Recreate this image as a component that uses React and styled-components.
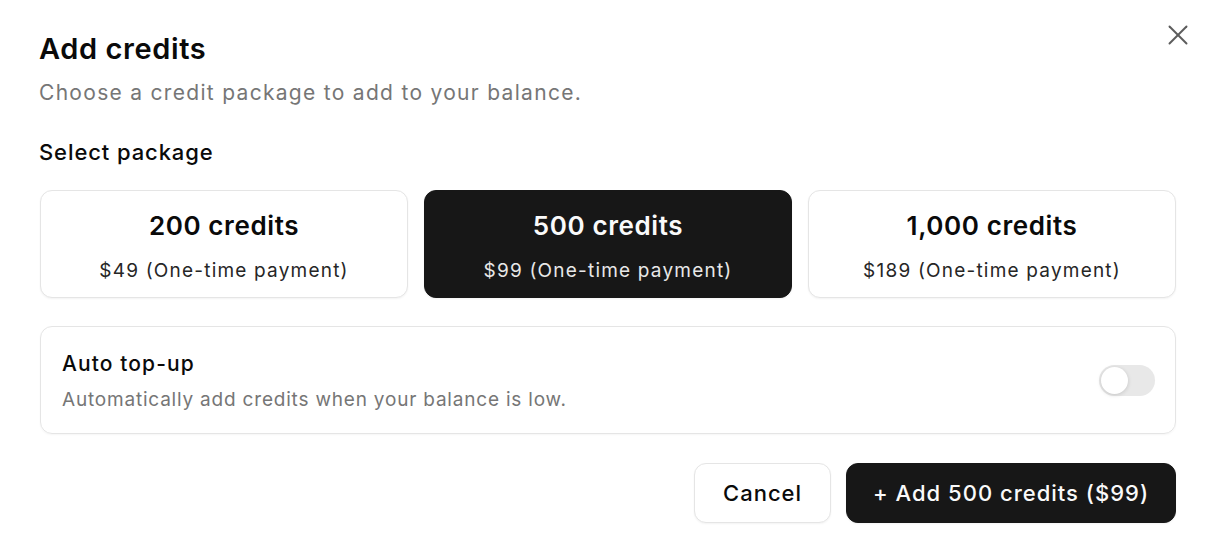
import { useState } from "react";
import styled, { createGlobalStyle } from "styled-components";

const GlobalStyle = createGlobalStyle`
  html, body {
    margin: 0;
    padding: 0;
    background: #fff;
  }
  body {
    font-family: Inter, "Noto Sans", "Liberation Sans", sans-serif;
    color: #0a0a0a;
    -webkit-font-smoothing: antialiased;
  }
`;

const Dialog = styled.div`
  position: relative;
  width: 1212px;
  height: 560px;
  box-sizing: border-box;
  padding: 31px 36px 0 39px;
  background: #fff;
  display: flex;
  flex-direction: column;
`;

const CloseButton = styled.button`
  position: absolute;
  top: 18px;
  right: 17px;
  width: 34px;
  height: 34px;
  padding: 0;
  border: 0;
  background: transparent;
  color: #5c5c5c;
  display: flex;
  align-items: center;
  justify-content: center;
  cursor: pointer;
`;

const Title = styled.h2`
  margin: 0;
  font-size: 29px;
  line-height: 36px;
  font-weight: 600;
  letter-spacing: 0.6px;
`;

const Description = styled.p`
  margin: 12px 0 0;
  font-size: 21px;
  line-height: 28px;
  color: #767676;
  letter-spacing: 1.3px;
`;

const SectionLabel = styled.div`
  margin-top: 31px;
  font-size: 22px;
  line-height: 28px;
  font-weight: 500;
  letter-spacing: 0.9px;
`;

const Packages = styled.div`
  margin-top: 24px;
  margin-left: 1px;
  display: grid;
  grid-template-columns: repeat(3, 1fr);
  gap: 16px;
`;

const PackageCard = styled.button`
  height: 108px;
  box-sizing: border-box;
  border-radius: 12px;
  border: 1px solid ${(p) => (p.$active ? "#171717" : "#e5e5e5")};
  background: ${(p) => (p.$active ? "#171717" : "#fff")};
  color: ${(p) => (p.$active ? "#fafafa" : "#0a0a0a")};
  box-shadow: 0 1px 2px rgba(0, 0, 0, 0.05);
  display: flex;
  flex-direction: column;
  align-items: center;
  justify-content: center;
  gap: 17px;
  padding: 5px 0 0;
  font-family: inherit;
  cursor: pointer;
`;

const PackageName = styled.span`
  font-size: 26px;
  line-height: 32px;
  font-weight: 600;
  letter-spacing: 0.6px;
`;

const PackagePrice = styled.span`
  font-size: 19px;
  line-height: 24px;
  letter-spacing: 1.2px;
  color: ${(p) => (p.$active ? "#e8e8e8" : "#262626")};
`;

const AutoBox = styled.div`
  margin-top: 28px;
  margin-left: 1px;
  height: 108px;
  box-sizing: border-box;
  border: 1px solid #e5e5e5;
  border-radius: 12px;
  padding: 0 20px 0 21px;
  display: flex;
  align-items: center;
  justify-content: space-between;
  box-shadow: 0 1px 2px rgba(0, 0, 0, 0.04);
`;

const AutoText = styled.div`
  display: flex;
  flex-direction: column;
  gap: 10px;
  padding-top: 2px;
`;

const AutoLabel = styled.div`
  font-size: 21px;
  line-height: 28px;
  font-weight: 500;
  letter-spacing: 1.1px;
`;

const AutoHint = styled.div`
  font-size: 19px;
  line-height: 24px;
  color: #767676;
  letter-spacing: 0.8px;
`;

const Switch = styled.button`
  width: 56px;
  height: 31px;
  padding: 2px;
  border: 0;
  border-radius: 999px;
  background: ${(p) => (p.$on ? "#171717" : "#e8e8e8")};
  display: flex;
  justify-content: ${(p) => (p.$on ? "flex-end" : "flex-start")};
  box-sizing: border-box;
  cursor: pointer;
`;

const Thumb = styled.span`
  width: 27px;
  height: 27px;
  border-radius: 50%;
  background: #fff;
  box-shadow: 0 1px 4px rgba(0, 0, 0, 0.15);
`;

const Footer = styled.div`
  margin-top: 29px;
  display: flex;
  justify-content: flex-end;
  gap: 15px;
`;

const Button = styled.button`
  height: 60px;
  box-sizing: border-box;
  padding: 0 ${(p) => (p.$primary ? "26px" : "28px")};
  border-radius: 12px;
  border: 1px solid ${(p) => (p.$primary ? "#171717" : "#e5e5e5")};
  background: ${(p) => (p.$primary ? "#171717" : "#fff")};
  color: ${(p) => (p.$primary ? "#fafafa" : "#0a0a0a")};
  font-family: inherit;
  font-size: 22px;
  font-weight: 500;
  letter-spacing: 1px;
  box-shadow: 0 1px 2px rgba(0, 0, 0, 0.05);
  cursor: pointer;
`;

const packages = [
  { credits: 200, label: "200 credits", price: 49 },
  { credits: 500, label: "500 credits", price: 99 },
  { credits: 1000, label: "1,000 credits", price: 189 },
];

export default function App() {
  const [selected, setSelected] = useState(500);
  const [autoTopUp, setAutoTopUp] = useState(false);
  const current = packages.find((p) => p.credits === selected);

  return (
    <>
      <GlobalStyle />
      <Dialog>
        <CloseButton aria-label="Close">
          <svg width="34" height="34" viewBox="0 0 24 24" fill="none" stroke="currentColor" strokeWidth="1.35" strokeLinecap="round">
            <path d="M18 6 6 18" />
            <path d="m6 6 12 12" />
          </svg>
        </CloseButton>
        <Title>Add credits</Title>
        <Description>Choose a credit package to add to your balance.</Description>
        <SectionLabel>Select package</SectionLabel>
        <Packages>
          {packages.map((p) => (
            <PackageCard
              key={p.credits}
              $active={p.credits === selected}
              onClick={() => setSelected(p.credits)}
            >
              <PackageName>{p.label}</PackageName>
              <PackagePrice $active={p.credits === selected}>
                ${p.price} (One-time payment)
              </PackagePrice>
            </PackageCard>
          ))}
        </Packages>
        <AutoBox>
          <AutoText>
            <AutoLabel>Auto top-up</AutoLabel>
            <AutoHint>Automatically add credits when your balance is low.</AutoHint>
          </AutoText>
          <Switch $on={autoTopUp} onClick={() => setAutoTopUp((v) => !v)}>
            <Thumb />
          </Switch>
        </AutoBox>
        <Footer>
          <Button>Cancel</Button>
          <Button $primary>
            + Add {current.label.replace(" credits", "")} credits (${current.price})
          </Button>
        </Footer>
      </Dialog>
    </>
  );
}
